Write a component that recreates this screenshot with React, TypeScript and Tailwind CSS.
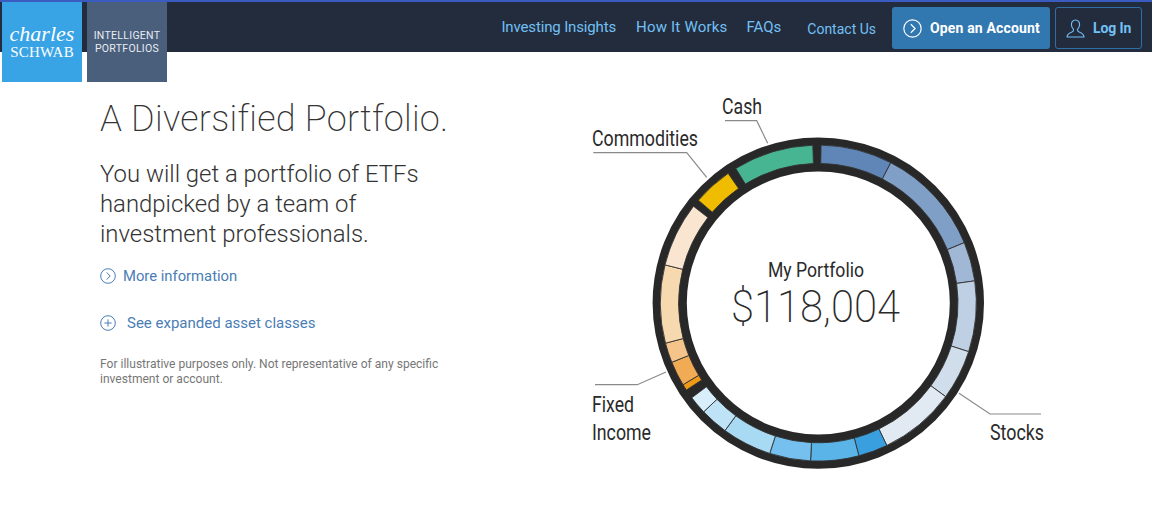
import React from "react";

const CX = 818.3;
const CY = 303.1;
const R1 = 139.7;
const R2 = 158;

function pt(r: number, a: number) {
  const t = (a * Math.PI) / 180;
  return [CX + r * Math.sin(t), CY - r * Math.cos(t)];
}
function wedge(a: number, b: number) {
  const [x1, y1] = pt(R2, a);
  const [x2, y2] = pt(R2, b);
  const [x3, y3] = pt(R1, b);
  const [x4, y4] = pt(R1, a);
  const f = (n: number) => n.toFixed(2);
  return `M${f(x1)} ${f(y1)}A${R2} ${R2} 0 0 1 ${f(x2)} ${f(y2)}L${f(x3)} ${f(y3)}A${R1} ${R1} 0 0 0 ${f(x4)} ${f(y4)}Z`;
}

const segments: [number, number, string][] = [
  [1, 27.3, "#5f86b6"],
  [27.3, 67.5, "#7f9fc6"],
  [67.5, 81.9, "#a0b8d6"],
  [81.9, 107.9, "#bfd0e4"],
  [107.9, 126.3, "#d0deeb"],
  [126.3, 154.3, "#e1e9f2"],
  [154.3, 165.1, "#3a9fdf"],
  [165.1, 182.8, "#5ab4e8"],
  [182.8, 197.9, "#75c0ee"],
  [197.9, 216.2, "#a8daf3"],
  [216.2, 226.5, "#bfe3f6"],
  [226.5, 233.2, "#d8eefa"],
  [236.6, 238.9, "#ef9a17"],
  [238.9, 248, "#f2ab55"],
  [248, 255.3, "#f5c48a"],
  [255.3, 284, "#f7d9b0"],
  [284, 307.8, "#fae6d0"],
  [310.6, 325.2, "#efbc00"],
  [328.5, 358, "#48b592"],
];

function Donut() {
  const label = "#2a2a2a";
  const lineProps = { fill: "none", stroke: "#8a8a8a", strokeWidth: 1.2 };
  return (
    <svg width={480} height={390} viewBox="580 90 480 390" className="block shrink-0" fontFamily="Roboto, sans-serif">
      <circle cx={CX} cy={CY} r={148.6} fill="none" stroke="#282828" strokeWidth={34.2} />
      {segments.map(([a, b, c]) => (
        <path key={a} d={wedge(a, b)} fill={c} stroke="#333333" strokeWidth={0.9} />
      ))}
      <path {...lineProps} d="M725 120.7H756.7L767.7 143.3" />
      <path {...lineProps} d="M593.3 152.7H686.7L706.7 177.3" />
      <path {...lineProps} d="M595 384.7H637.3L666 372" />
      <path {...lineProps} d="M959 393.3L990 414H1041" />
      <text x={722} y={114} fontSize={22} fill={label} textLength={40} lengthAdjust="spacingAndGlyphs">Cash</text>
      <text x={592} y={146} fontSize={22} fill={label} textLength={106} lengthAdjust="spacingAndGlyphs">Commodities</text>
      <text x={592} y={412} fontSize={22} fill={label} textLength={42} lengthAdjust="spacingAndGlyphs">Fixed</text>
      <text x={592} y={440} fontSize={22} fill={label} textLength={59} lengthAdjust="spacingAndGlyphs">Income</text>
      <text x={990} y={440} fontSize={22} fill={label} textLength={54} lengthAdjust="spacingAndGlyphs">Stocks</text>
      <text x={768} y={277} fontSize={20.5} fill={label} textLength={96} lengthAdjust="spacingAndGlyphs">My Portfolio</text>
      <text x={731} y={322} fontSize={44} fontWeight={200} fill={label} textLength={169} lengthAdjust="spacingAndGlyphs">$118,004</text>
    </svg>
  );
}

function CircleChevron({ size, color, sw = 1 }: { size: number; color: string; sw?: number }) {
  return (
    <svg width={size} height={size} viewBox="0 0 16 16" fill="none" stroke={color} strokeWidth={sw} className="shrink-0">
      <circle cx="8" cy="8" r="7.3" />
      <path d="M6.6 4.4L10.2 8L6.6 11.6" />
    </svg>
  );
}

function CirclePlus({ size, color }: { size: number; color: string }) {
  return (
    <svg width={size} height={size} viewBox="0 0 16 16" fill="none" stroke={color} strokeWidth={1} className="shrink-0">
      <circle cx="8" cy="8" r="7.3" />
      <path d="M8 4.4V11.6M4.4 8H11.6" />
    </svg>
  );
}

function UserIcon() {
  return (
    <svg width={19} height={19} viewBox="0 0 19 19" fill="none" stroke="#72c0f5" strokeWidth={1.1} className="shrink-0">
      <path d="M9.5 1C6.9 1 5.4 3 5.4 5.5C5.4 7.7 6.3 9.2 7.4 10.2V11.6C7.4 12.4 6.6 12.8 5.4 13.2C3.2 14 1.2 14.8 1 18H18C17.8 14.8 15.8 14 13.6 13.2C12.4 12.8 11.6 12.4 11.6 11.6V10.2C12.7 9.2 13.6 7.7 13.6 5.5C13.6 3 12.1 1 9.5 1Z" />
    </svg>
  );
}

export default function App() {
  return (
    <div className="w-[1152px] h-[518px] overflow-hidden bg-white font-['Roboto',sans-serif]">
      <header className="h-[52px] bg-[#232c3d] border-t-2 border-[#3a5bbf] flex items-start pl-[2px] pr-[10px]">
        <div className="w-[80px] h-[80px] shrink-0 bg-[#38a3e5] text-white flex flex-col items-center justify-center pb-[3px] font-['Liberation_Serif',serif] relative z-10">
          <span className="italic text-[22px] leading-[22px]">charles</span>
          <span className="text-[15px] leading-[14px] tracking-[0.2px]">SCHWAB</span>
        </div>
        <div className="w-[80px] h-[80px] shrink-0 ml-[5px] bg-[#4a5f7c] text-[#e8ecf2] flex flex-col items-center justify-center text-[10.5px] leading-[13.5px] tracking-[0.3px] relative z-10">
          <span>INTELLIGENT</span>
          <span>PORTFOLIOS</span>
        </div>
        <nav className="ml-auto flex items-start">
          <a className="mt-[15px] text-[15px] leading-[20px] tracking-[-0.15px] text-[#72c0f5]">Investing Insights</a>
          <a className="mt-[15px] ml-[20px] text-[15px] leading-[20px] tracking-[0.2px] text-[#72c0f5]">How It Works</a>
          <a className="mt-[15px] ml-[19px] text-[15px] leading-[20px] text-[#72c0f5]">FAQs</a>
          <a className="mt-[17px] ml-[26px] text-[14px] leading-[20px] text-[#72c0f5]">Contact Us</a>
          <a className="mt-[5px] ml-[16px] w-[158px] h-[42px] rounded-[3px] bg-[#3278b0] text-white font-bold text-[14px] tracking-[0.15px] flex items-center pl-[11px] gap-[8px]">
            <CircleChevron size={19} color="#ffffff" />
            Open an Account
          </a>
          <a className="mt-[5px] ml-[5px] w-[87px] h-[42px] rounded-[3px] border border-[#2f6fa8] text-[#72c0f5] font-bold text-[14px] tracking-[-0.1px] flex items-center pl-[10px] gap-[8px]">
            <UserIcon />
            Log In
          </a>
        </nav>
      </header>
      <main className="flex items-start">
        <section className="w-[580px] shrink-0 pl-[100px] text-[#333]">
          <h1 className="mt-[47px] text-[36px] leading-[40px] font-extralight tracking-[0.27px]">A Diversified Portfolio.</h1>
          <p className="mt-[20px] text-[23.9px] leading-[30px] font-light w-[340px]">
            You will get a portfolio of ETFs handpicked by a team of investment professionals.
          </p>
          <a className="mt-[17px] flex items-center gap-[7px] text-[14.8px] leading-[20px] text-[#4a7db5]">
            <CircleChevron size={16} color="#4a7db5" />
            More information
          </a>
          <a className="mt-[27px] flex items-center gap-[11px] text-[15px] leading-[20px] text-[#4a7db5]">
            <CirclePlus size={16} color="#4a7db5" />
            See expanded asset classes
          </a>
          <p className="mt-[24px] text-[12.05px] leading-[15px] text-[#777] w-[350px]">
            For illustrative purposes only. Not representative of any specific investment or account.
          </p>
        </section>
        <div className="mt-[38px]">
          <Donut />
        </div>
      </main>
    </div>
  );
}
